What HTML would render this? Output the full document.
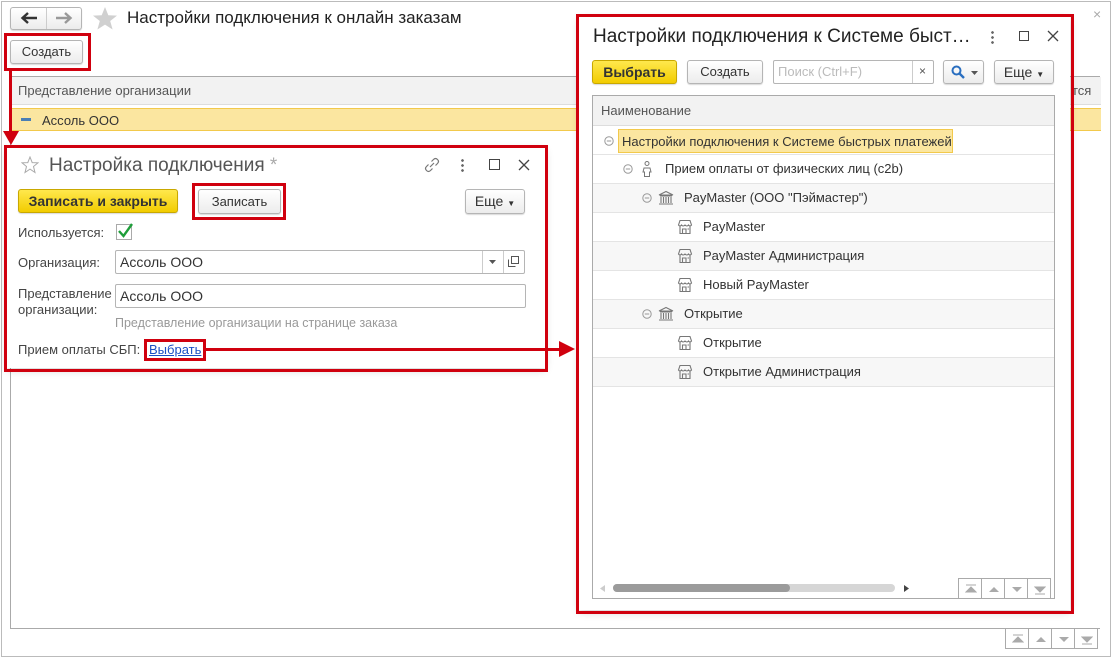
<!DOCTYPE html>
<html><head><meta charset="utf-8">
<style>
*{box-sizing:border-box;margin:0;padding:0}
body{width:1116px;height:660px;background:#fff;font-family:"Liberation Sans","Noto Sans CJK SC",sans-serif;font-size:13px;color:#333;position:relative;overflow:hidden}
.a{position:absolute}
.btn{position:absolute;border:1px solid #b5b5b5;border-radius:3px;background:linear-gradient(#fff,#ececec);box-shadow:0 1px 1px rgba(0,0,0,.15);text-align:center;color:#333;font-size:13px}
.yb{background:linear-gradient(#ffe84d,#f2cc00);border-color:#c9a800;font-weight:bold;color:#333}
.red{position:absolute;border:3px solid #d0000e}
.inp{position:absolute;border:1px solid #b5b5b5;border-radius:2px;background:#fff;font-size:14px;padding-left:4px}
.row{position:absolute;left:593px;width:461px;height:29px;border-bottom:1px solid #e4e4e4;font-size:13px;line-height:28px}
.row svg{position:absolute}
.g{background:#f7f7f7}
.nb{position:absolute;width:24px;height:21px;border:1px solid #aaa;background:#fff}
.nb svg{position:absolute;left:6px;top:5px}
</style></head><body>
<svg width="0" height="0" style="position:absolute">
<defs>
<g id="shop"><path d="M1.5 6 L3 1.5 H13 L14.5 6 Q13 8 11.5 6 Q10 8 8 6 Q6 8 4.5 6 Q3 8 1.5 6 Z M3 7.5 V14.5 H13 V7.5 M5.5 14.5 V10 H9 V14.5 M10.5 10 H12" fill="none" stroke="#777" stroke-width="1.1"/></g>
<g id="bank"><path d="M1 5 L8 1.5 L15 5 Z M2 6 H14 M3 7 V13 M5.5 7 V13 M8 7 V13 M10.5 7 V13 M13 7 V13 M1 14 H15" fill="none" stroke="#777" stroke-width="1.1"/></g>
<g id="col"><circle cx="5" cy="5" r="4.2" fill="none" stroke="#999"/><path d="M2.8 5 H7.2" stroke="#999"/></g>
<g id="n1"><path d="M1 1 H11 M1 8 L6 3 L11 8 Z" fill="#aaa" stroke="#aaa"/></g>
<g id="n2"><path d="M1 8 L6 3 L11 8 Z" fill="#aaa"/></g>
<g id="n3"><path d="M1 3 L6 8 L11 3 Z" fill="#aaa"/></g>
<g id="n4"><path d="M1 10 H11 M1 3 L6 8 L11 3 Z" fill="#aaa" stroke="#aaa"/></g>
</defs></svg>
<!-- outer frame -->
<div class="a" style="left:1px;top:1px;width:1110px;height:656px;border:1px solid #bbb"></div>
<!-- nav -->
<div class="btn" style="left:10px;top:7px;width:72px;height:23px"></div>
<div class="a" style="left:46px;top:8px;width:1px;height:21px;background:#ccc"></div>
<svg class="a" style="left:20px;top:12px" width="18" height="12"><path d="M17 6 H3 M8 1 L2.5 6 L8 11" fill="none" stroke="#333" stroke-width="2.4"/></svg>
<svg class="a" style="left:55px;top:12px" width="18" height="12"><path d="M1 6 H15 M10 1 L15.5 6 L10 11" fill="none" stroke="#999" stroke-width="2.4"/></svg>
<svg class="a" style="left:92px;top:6px" width="26" height="25"><path d="M13 1 L16.3 9.3 L25 9.6 L18.2 15 L20.6 23.5 L13 18.6 L5.4 23.5 L7.8 15 L1 9.6 L9.7 9.3 Z" fill="#d0d0d0"/></svg>
<div class="a" style="left:127px;top:8px;font-size:17px;color:#222">Настройки подключения к онлайн заказам</div>
<div class="a" style="left:1093px;top:6px;color:#aaa;font-size:14px">×</div>
<!-- Создать -->
<div class="btn" style="left:10px;top:40px;width:73px;height:24px;line-height:22px">Создать</div>
<div class="red" style="left:4px;top:33px;width:87px;height:38px"></div>
<!-- list -->
<div class="a" style="left:10px;top:76px;width:1090px;height:553px;border:1px solid #aaa;border-right:none"></div>
<div class="a" style="left:11px;top:77px;width:1090px;height:28px;background:#f2f2f2;border-bottom:1px solid #ddd"></div>
<div class="a" style="left:18px;top:83px;color:#555">Представление организации</div>
<div class="a" style="left:1072px;top:83px;color:#555">тся</div>
<div class="a" style="left:11px;top:108px;width:1090px;height:23px;background:#fbe6a0;border-top:1px solid #f2c94c;border-bottom:1px solid #f2c94c"></div>
<div class="a" style="left:21px;top:118px;width:10px;height:3px;background:#4a7fb5"></div>
<div class="a" style="left:42px;top:113px;color:#333">Ассоль ООО</div>
<!-- vertical arrow -->
<div class="a" style="left:9px;top:71px;width:3px;height:66px;background:#d0000e"></div>
<div class="a" style="left:3px;top:131px;width:0;height:0;border-left:8px solid transparent;border-right:8px solid transparent;border-top:14px solid #d0000e"></div>
<!-- main bottom nav -->
<div class="nb" style="left:1005px;top:628px"><svg width="12" height="11"><use href="#n1"/></svg></div>
<div class="nb" style="left:1028px;top:628px"><svg width="12" height="11"><use href="#n2"/></svg></div>
<div class="nb" style="left:1051px;top:628px"><svg width="12" height="11"><use href="#n3"/></svg></div>
<div class="nb" style="left:1074px;top:628px"><svg width="12" height="11"><use href="#n4"/></svg></div>
<!-- dialog -->
<div class="a" style="left:7px;top:148px;width:538px;height:220px;background:#fff;box-shadow:0 2px 8px rgba(0,0,0,.2)"></div>
<div class="red" style="left:4px;top:145px;width:544px;height:227px"></div>
<svg class="a" style="left:21px;top:156px" width="18" height="18"><path d="M9 1 L11.2 6.6 L17 6.8 L12.5 10.5 L14 16.5 L9 13.1 L4 16.5 L5.5 10.5 L1 6.8 L6.8 6.6 Z" fill="none" stroke="#aaa"/></svg>
<div class="a" style="left:49px;top:155px;font-size:19px;color:#555">Настройка подключения <span style="color:#aaa">*</span></div>
<svg class="a" style="left:424px;top:157px" width="16" height="16"><path d="M6 10 L10 6 M7.5 4.5 L9.5 2.5 Q11.5 0.5 13.5 2.5 Q15.5 4.5 13.5 6.5 L11.5 8.5 M8.5 11.5 L6.5 13.5 Q4.5 15.5 2.5 13.5 Q0.5 11.5 2.5 9.5 L4.5 7.5" fill="none" stroke="#777" stroke-width="1.2"/></svg>
<div class="a" style="left:461px;top:158px;width:3px;height:14px;background:radial-gradient(circle,#666 1.2px,transparent 1.5px) 0 0/3px 5px"></div>
<div class="a" style="left:489px;top:159px;width:11px;height:11px;border:1.5px solid #444"></div>
<svg class="a" style="left:518px;top:159px" width="12" height="12"><path d="M1 1 L11 11 M11 1 L1 11" stroke="#444" stroke-width="1.3"/></svg>
<div class="btn yb" style="left:18px;top:189px;width:160px;height:24px;line-height:22px;font-size:14px">Записать и закрыть</div>
<div class="btn" style="left:198px;top:189px;width:83px;height:25px;line-height:23px">Записать</div>
<div class="red" style="left:192px;top:183px;width:94px;height:37px"></div>
<div class="btn" style="left:465px;top:189px;width:60px;height:25px;line-height:23px;font-size:14px">Еще <span style="font-size:8px">▼</span></div>
<div class="a" style="left:18px;top:225px;color:#444">Используется:</div>
<div class="a" style="left:116px;top:224px;width:16px;height:16px;border:1px solid #aaa;background:#fff"></div>
<svg class="a" style="left:117px;top:222px" width="17" height="17"><path d="M2 9 L6.5 14 L15 2" fill="none" stroke="#1e9e3a" stroke-width="2.4"/></svg>
<div class="a" style="left:18px;top:255px;color:#444">Организация:</div>
<div class="inp" style="left:115px;top:250px;width:410px;height:24px;line-height:22px">Ассоль ООО</div>
<div class="a" style="left:482px;top:251px;width:1px;height:22px;background:#ccc"></div>
<div class="a" style="left:503px;top:251px;width:1px;height:22px;background:#ccc"></div>
<svg class="a" style="left:489px;top:260px" width="7" height="4"><path d="M0 0 H7 L3.5 4 Z" fill="#555"/></svg>
<svg class="a" style="left:508px;top:256px" width="11" height="11"><path d="M3.5 0.5 H10.5 V7.5 H3.5 Z M0.5 3.5 V10.5 H7.5" fill="none" stroke="#555"/></svg>
<div class="a" style="left:18px;top:286px;color:#444;line-height:16px">Представление<br>организации:</div>
<div class="inp" style="left:115px;top:284px;width:411px;height:24px;line-height:22px">Ассоль ООО</div>
<div class="a" style="left:115px;top:316px;color:#999;font-size:12.5px">Представление организации на странице заказа</div>
<div class="a" style="left:18px;top:342px;color:#444">Прием оплаты СБП:</div>
<div class="a" style="left:149px;top:342px;color:#1a4fc4;text-decoration:underline">Выбрать</div>
<div class="red" style="left:144px;top:339px;width:62px;height:22px"></div>
<div class="a" style="left:206px;top:348px;width:356px;height:3px;background:#d0000e"></div>
<div class="a" style="left:559px;top:341px;width:0;height:0;border-top:8px solid transparent;border-bottom:8px solid transparent;border-left:16px solid #d0000e"></div>
<!-- right dialog -->
<div class="a" style="left:579px;top:17px;width:491px;height:593px;background:#fff;box-shadow:0 2px 8px rgba(0,0,0,.2)"></div>
<div class="red" style="left:576px;top:14px;width:498px;height:600px"></div>
<div class="a" style="left:593px;top:26px;font-size:19px;color:#222">Настройки подключения к Системе быст…</div>
<div class="a" style="left:991px;top:30px;width:3px;height:14px;background:radial-gradient(circle,#666 1.2px,transparent 1.5px) 0 0/3px 5px"></div>
<div class="a" style="left:1019px;top:31px;width:10px;height:10px;border:1.5px solid #444"></div>
<svg class="a" style="left:1047px;top:30px" width="12" height="12"><path d="M1 1 L11 11 M11 1 L1 11" stroke="#444" stroke-width="1.3"/></svg>
<div class="btn yb" style="left:592px;top:60px;width:85px;height:24px;line-height:22px;font-size:14px">Выбрать</div>
<div class="btn" style="left:687px;top:60px;width:76px;height:24px;line-height:22px">Создать</div>
<div class="inp" style="left:773px;top:60px;width:161px;height:24px;line-height:22px;color:#bbb;font-size:13px">Поиск (Ctrl+F)</div>
<div class="a" style="left:912px;top:61px;width:1px;height:22px;background:#ccc"></div>
<div class="a" style="left:919px;top:64px;color:#555;font-size:12px">×</div>
<div class="btn" style="left:943px;top:60px;width:41px;height:24px"></div>
<svg class="a" style="left:951px;top:65px" width="14" height="14"><circle cx="5.5" cy="5.5" r="4" fill="none" stroke="#2a6fc0" stroke-width="2"/><path d="M8.5 8.5 L13 13" stroke="#2a6fc0" stroke-width="2.4"/></svg>
<svg class="a" style="left:971px;top:71px" width="7" height="4"><path d="M0 0 H7 L3.5 4 Z" fill="#555"/></svg>
<div class="btn" style="left:994px;top:60px;width:60px;height:24px;line-height:22px;font-size:14px">Еще <span style="font-size:8px">▼</span></div>
<div class="a" style="left:592px;top:95px;width:463px;height:504px;border:1px solid #aaa"></div>
<div class="a" style="left:593px;top:96px;width:461px;height:30px;background:#f2f2f2;border-bottom:1px solid #ddd"></div>
<div class="a" style="left:601px;top:103px;color:#555">Наименование</div>
<div class="row" style="top:126px"></div>
<div class="a" style="left:618px;top:129px;width:335px;height:24px;background:#fbe6a0;border:1px solid #f2c94c"></div>
<svg class="a" style="left:604px;top:136px" width="10" height="10"><use href="#col"/></svg>
<div class="a" style="left:622px;top:134px;color:#333">Настройки подключения к Системе быстрых платежей</div>
<div class="row" style="top:155px"><svg style="left:30px;top:9px" width="10" height="10"><use href="#col"/></svg><svg style="left:48px;top:6px" width="12" height="17"><circle cx="6" cy="2.5" r="2" fill="none" stroke="#777"/><path d="M3 7 H9 L10 11 L8.5 11 V15.5 H3.5 V11 L2 11 Z" fill="none" stroke="#777"/></svg><span style="position:absolute;left:72px">Прием оплаты от физических лиц (c2b)</span></div>
<div class="row g" style="top:184px"><svg style="left:49px;top:9px" width="10" height="10"><use href="#col"/></svg><svg style="left:65px;top:6px" width="16" height="16"><use href="#bank"/></svg><span style="position:absolute;left:91px">PayMaster (ООО "Пэймастер")</span></div>
<div class="row" style="top:213px"><svg style="left:84px;top:6px" width="16" height="16"><use href="#shop"/></svg><span style="position:absolute;left:110px">PayMaster</span></div>
<div class="row g" style="top:242px"><svg style="left:84px;top:6px" width="16" height="16"><use href="#shop"/></svg><span style="position:absolute;left:110px">PayMaster Администрация</span></div>
<div class="row" style="top:271px"><svg style="left:84px;top:6px" width="16" height="16"><use href="#shop"/></svg><span style="position:absolute;left:110px">Новый PayMaster</span></div>
<div class="row g" style="top:300px"><svg style="left:49px;top:9px" width="10" height="10"><use href="#col"/></svg><svg style="left:65px;top:6px" width="16" height="16"><use href="#bank"/></svg><span style="position:absolute;left:91px">Открытие</span></div>
<div class="row" style="top:329px"><svg style="left:84px;top:6px" width="16" height="16"><use href="#shop"/></svg><span style="position:absolute;left:110px">Открытие</span></div>
<div class="row g" style="top:358px"><svg style="left:84px;top:6px" width="16" height="16"><use href="#shop"/></svg><span style="position:absolute;left:110px">Открытие Администрация</span></div>
<!-- scrollbar -->
<svg class="a" style="left:600px;top:585px" width="5" height="7"><path d="M5 0 V7 L0 3.5 Z" fill="#ccc"/></svg>
<div class="a" style="left:613px;top:584px;width:282px;height:8px;border-radius:4px;background:#d6d6d6"></div>
<div class="a" style="left:613px;top:584px;width:177px;height:8px;border-radius:4px;background:#9b9b9b"></div>
<svg class="a" style="left:904px;top:585px" width="5" height="7"><path d="M0 0 V7 L5 3.5 Z" fill="#444"/></svg>
<div class="nb" style="left:958px;top:578px"><svg width="12" height="11"><use href="#n1"/></svg></div>
<div class="nb" style="left:981px;top:578px"><svg width="12" height="11"><use href="#n2"/></svg></div>
<div class="nb" style="left:1004px;top:578px"><svg width="12" height="11"><use href="#n3"/></svg></div>
<div class="nb" style="left:1027px;top:578px"><svg width="12" height="11"><use href="#n4"/></svg></div>
</body></html>
